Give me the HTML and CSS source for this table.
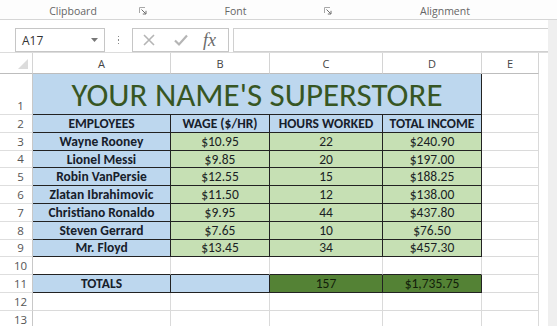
FILE: index.html
```html
<!DOCTYPE html>
<html>
<head>
<meta charset="utf-8">
<link rel="stylesheet" href="styles.css">
</head>
<body>
<div class="app">
  <div class="ribbon">
    <span class="rlabel g1">Clipboard</span>
    <span class="launch"><svg width="8" height="8" viewBox="0 0 8 8"><path d="M0.5 6V0.5H6" fill="none" stroke="#a8a8a8" stroke-width="1"/><path d="M2.5 2.5L6.8 6.8M7 3.8V7H3.8" fill="none" stroke="#6e6e6e" stroke-width="1"/></svg></span>
    <span class="rlabel g2">Font</span>
    <span class="launch"><svg width="8" height="8" viewBox="0 0 8 8"><path d="M0.5 6V0.5H6" fill="none" stroke="#a8a8a8" stroke-width="1"/><path d="M2.5 2.5L6.8 6.8M7 3.8V7H3.8" fill="none" stroke="#6e6e6e" stroke-width="1"/></svg></span>
    <span class="rlabel g3">Alignment</span>
  </div>
  <div class="body">
    <div class="main">
      <div class="fbar">
        <div class="namebox"><span>A17</span><svg width="7" height="4" viewBox="0 0 7 4"><path d="M0 0H7L3.5 4Z" fill="#777"/></svg></div>
        <div class="grip"><i></i><i></i><i></i></div>
        <div class="fbtns">
          <svg class="ico" width="14" height="14" viewBox="0 0 14 14"><path d="M2 2L12 12M12 2L2 12" stroke="#b5b5b5" stroke-width="1.6" fill="none"/></svg>
          <svg class="ico" width="16" height="14" viewBox="0 0 16 14"><path d="M2 7.5L6 11.5L14 2.5" stroke="#b5b5b5" stroke-width="2.2" fill="none"/></svg>
          <span class="fx">fx</span>
        </div>
        <div class="finput"></div>
      </div>
      <div class="sheet">
        <div class="corner"><svg width="10" height="10" viewBox="0 0 10 10"><path d="M10 0V10H0Z" fill="#dcdcdc"/></svg></div>
        <div class="ch">A</div><div class="ch">B</div><div class="ch">C</div><div class="ch">D</div><div class="ch">E</div>

        <div class="rh">1</div>
        <div class="c title t">YOUR NAME'S SUPERSTORE</div>
        <div class="c"></div>

        <div class="rh">2</div>
        <div class="c t blue b">EMPLOYEES</div><div class="c t blue b">WAGE ($/HR)</div><div class="c t blue b">HOURS WORKED</div><div class="c t blue b">TOTAL INCOME</div><div class="c"></div>

        <div class="rh">3</div>
        <div class="c t blue b">Wayne Rooney</div><div class="c t green">$10.95</div><div class="c t green">22</div><div class="c t green">$240.90</div><div class="c"></div>

        <div class="rh">4</div>
        <div class="c t blue b">Lionel Messi</div><div class="c t green">$9.85</div><div class="c t green">20</div><div class="c t green">$197.00</div><div class="c"></div>

        <div class="rh">5</div>
        <div class="c t blue b">Robin VanPersie</div><div class="c t green">$12.55</div><div class="c t green">15</div><div class="c t green">$188.25</div><div class="c"></div>

        <div class="rh">6</div>
        <div class="c t blue b">Zlatan Ibrahimovic</div><div class="c t green">$11.50</div><div class="c t green">12</div><div class="c t green">$138.00</div><div class="c"></div>

        <div class="rh">7</div>
        <div class="c t blue b">Christiano Ronaldo</div><div class="c t green">$9.95</div><div class="c t green">44</div><div class="c t green">$437.80</div><div class="c"></div>

        <div class="rh">8</div>
        <div class="c t blue b">Steven Gerrard</div><div class="c t green">$7.65</div><div class="c t green">10</div><div class="c t green">$76.50</div><div class="c"></div>

        <div class="rh">9</div>
        <div class="c t blue b">Mr. Floyd</div><div class="c t green">$13.45</div><div class="c t green">34</div><div class="c t green">$457.30</div><div class="c"></div>

        <div class="rh">10</div>
        <div class="c db"></div><div class="c db"></div><div class="c db"></div><div class="c db"></div><div class="c"></div>

        <div class="rh">11</div>
        <div class="c t blue b">TOTALS</div><div class="c t blue"></div><div class="c t dark">157</div><div class="c t dark">$1,735.75</div><div class="c"></div>

        <div class="rh">12</div>
        <div class="c"></div><div class="c"></div><div class="c"></div><div class="c"></div><div class="c"></div>

        <div class="rh">13</div>
        <div class="c"></div><div class="c"></div><div class="c"></div><div class="c"></div><div class="c"></div>
      </div>
    </div>
    <div class="strip"></div>
  </div>
</div>
</body>
</html>
```
FILE: styles.css
```css
* { box-sizing: border-box; }
html, body { margin: 0; padding: 0; }
body {
  width: 557px;
  height: 326px;
  overflow: hidden;
  background: #ffffff;
  font-family: "Open Sans", "Noto Sans", sans-serif;
}
.app { width: 557px; height: 326px; display: flex; flex-direction: column; }

.ribbon {
  height: 20px;
  display: flex;
  align-items: flex-start;
  padding-top: 4px;
  border-bottom: 1px solid #d6d6d6;
  background: #fdfdfd;
}
.rlabel {
  font-size: 10.5px;
  line-height: 14px;
  color: #666;
  text-align: center;
}
.g1 { width: 138px; padding-left: 8px; }
.g2 { width: 175px; }
.g3 { width: 224px; }
.launch { width: 10px; display: flex; align-items: center; height: 14px; padding-left: 1px; }

.body { flex: 1; display: flex; min-height: 0; }
.main { width: 548px; display: flex; flex-direction: column; background: #fff; }
.strip { flex: 1; background: #efefef; }

.fbar {
  height: 36px;
  display: flex;
  align-items: flex-start;
  padding: 8px 0 0 15px;
  border-bottom: 1px solid #dcdcdc;
}
.namebox {
  width: 90px;
  height: 24px;
  border: 1px solid #c6c6c6;
  display: flex;
  align-items: center;
  justify-content: space-between;
  padding: 0 6px 0 6px;
  font-size: 12px;
  color: #333;
}
.grip {
  width: 27px;
  height: 24px;
  display: flex;
  flex-direction: column;
  align-items: center;
  justify-content: center;
  gap: 2px;
}
.grip i { display: block; width: 1.5px; height: 1.5px; background: #8a8a8a; }
.fbtns {
  width: 97px;
  height: 24px;
  border: 1px solid #c6c6c6;
  display: flex;
  align-items: center;
  padding-left: 9px;
  gap: 17px;
}
.fx {
  font-family: "Liberation Serif", "DejaVu Serif", serif;
  font-style: italic;
  font-size: 18px;
  line-height: 20px;
  color: #6a6a6a;
  margin-left: -3px;
}
.finput {
  margin-left: 4px;
  flex: 1;
  height: 24px;
  border: 1px solid #d0d0d0;
  border-right: none;
}

.sheet {
  width: 539px;
  display: grid;
  grid-template-columns: 33px 138px 99px 113px 99px 57px;
  grid-template-rows: 21px 41px repeat(12, 17.8px);
  font-family: "Carlito", "Lato", sans-serif;
}
.corner {
  border-right: 1px solid #d4d4d4;
  border-bottom: 1px solid #bdbdbd;
  display: flex;
  align-items: flex-end;
  justify-content: flex-end;
  padding: 0 4px 4px 0;
}
.ch {
  border-right: 1px solid #d4d4d4;
  border-bottom: 1px solid #bdbdbd;
  font-family: "Open Sans", "Noto Sans", sans-serif;
  font-size: 11px;
  color: #444;
  display: flex;
  align-items: center;
  justify-content: center;
}
.rh {
  border-right: 1px solid #c8c8c8;
  border-bottom: 1px solid #dedede;
  font-family: "Open Sans", "Noto Sans", sans-serif;
  font-size: 11.5px;
  line-height: 14px;
  color: #555;
  display: flex;
  align-items: flex-end;
  justify-content: center;
  padding-left: 9px;
  padding-bottom: 1px;
}
.c {
  border-right: 1px solid #dadada;
  border-bottom: 1px solid #dadada;
  display: flex;
  align-items: center;
  justify-content: center;
  font-size: 13.5px;
  color: #1b1f24;
  white-space: nowrap;
  overflow: hidden;
}
.t { border-right-color: #222; border-bottom-color: #222; }
.db { border-bottom-color: #222; }
.blue { background: #bdd7ee; }
.green { background: #c6e0b4; }
.dark { background: #548235; color: #12200a; }
.b { font-weight: bold; color: #17202b; }
.title {
  grid-column: span 4;
  background: #bdd7ee;
  align-items: flex-end;
  font-size: 33px;
  line-height: 34px;
  padding-bottom: 2px;
  color: #375623;
}
```
